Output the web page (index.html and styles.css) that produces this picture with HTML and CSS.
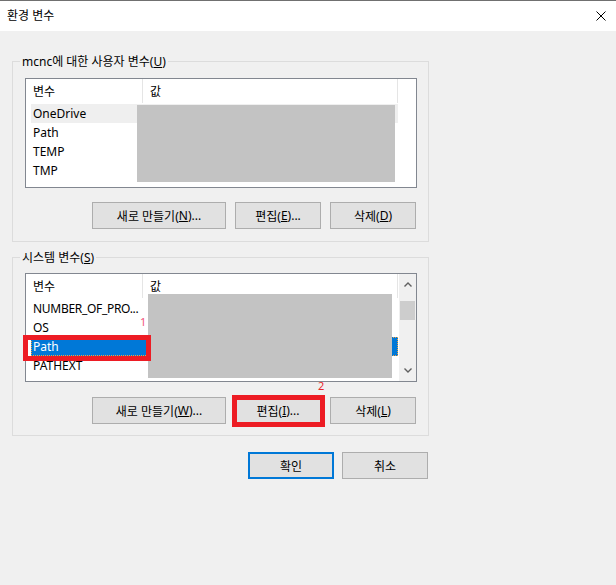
FILE: index.html
```html
<!DOCTYPE html>
<html lang="ko">
<head>
<meta charset="utf-8">
<title>환경 변수</title>
<link rel="stylesheet" href="styles.css">
</head>
<body>
<div class="dialog">
  <div class="titlebar">
    <span class="title">환경 변수</span>
    <svg class="close" width="10" height="10" viewBox="0 0 10 10"><path d="M0.5 0.5 L9.5 9.5 M9.5 0.5 L0.5 9.5" stroke="#000" stroke-width="1" fill="none"/></svg>
  </div>
  <div class="content">
    <div class="group group-user">
      <div class="legend">mcnc에 대한 사용자 변수(<u>U</u>)</div>
      <div class="list list-user">
        <div class="list-main">
          <div class="list-head">
            <div class="hcol hcol1">변수</div>
            <div class="hcol hcol2">값</div>
          </div>
          <div class="rows">
            <div class="row row-hover"><span class="cell">OneDrive</span></div>
            <div class="row"><span class="cell">Path</span></div>
            <div class="row"><span class="cell">TEMP</span></div>
            <div class="row"><span class="cell">TMP</span></div>
          </div>
        </div>
        <div class="redact redact-user"></div>
      </div>
      <div class="btnrow">
        <button class="btn btn-new">새로 만들기(<u>N</u>)...</button>
        <button class="btn btn-sm">편집(<u>E</u>)...</button>
        <button class="btn btn-sm">삭제(<u>D</u>)</button>
      </div>
    </div>

    <div class="group group-sys">
      <div class="legend">시스템 변수(<u>S</u>)</div>
      <div class="list list-sys">
        <div class="list-main">
          <div class="list-head">
            <div class="hcol hcol1">변수</div>
            <div class="hcol hcol2">값</div>
          </div>
          <div class="rows">
            <div class="row"><span class="cell cell-long">NUMBER_OF_PRO...</span></div>
            <div class="row"><span class="cell">OS</span></div>
            <div class="row row-selected"><span class="cell">Path</span></div>
            <div class="row"><span class="cell">PATHEXT</span></div>
          </div>
        </div>
        <div class="scrollbar">
          <div class="sb-btn sb-up"><svg width="8" height="5" viewBox="0 0 8 5"><path d="M0.5 4.5 L4 1 L7.5 4.5" stroke="#606060" stroke-width="1.4" fill="none"/></svg></div>
          <div class="sb-track"><div class="sb-thumb"></div></div>
          <div class="sb-btn sb-down"><svg width="8" height="5" viewBox="0 0 8 5"><path d="M0.5 0.5 L4 4 L7.5 0.5" stroke="#606060" stroke-width="1.4" fill="none"/></svg></div>
        </div>
        <div class="redact redact-sys"></div>
      </div>
      <div class="btnrow btnrow-sys">
        <button class="btn btn-new">새로 만들기(<u>W</u>)...</button>
        <button class="btn btn-sm">편집(<u>I</u>)...</button>
        <button class="btn btn-sm">삭제(<u>L</u>)</button>
      </div>
    </div>

    <div class="footer">
      <button class="btn btn-ok">확인</button>
      <button class="btn btn-cancel">취소</button>
    </div>
  </div>

  <div class="mark mark-path"></div>
  <div class="mark mark-edit"></div>
  <div class="label label-1">1</div>
  <div class="label label-2">2</div>
</div>
</body>
</html>
```

FILE: styles.css
```css
* { box-sizing: border-box; }
html, body { margin: 0; padding: 0; }
body {
  width: 616px;
  height: 585px;
  overflow: hidden;
  background: #f0f0f0;
  font-family: "Noto Sans", "Noto Sans CJK KR", sans-serif;
  font-size: 12px;
  color: #000;
}
.dialog {
  position: relative;
  width: 616px;
  height: 585px;
  background: #f0f0f0;
  border-top: 1px solid #707070;
}
.titlebar {
  height: 30px;
  background: #fff;
  display: flex;
  align-items: center;
  justify-content: space-between;
  padding: 0 10px 0 7px;
}
.title { line-height: 16px; }
.close { display: block; }

.content { padding: 30px 0 0 12px; }

.group {
  width: 417px;
  border: 1px solid #dcdcdc;
  padding: 0 11px 12px 12px;
}
.group-sys { margin-top: 15px; padding-bottom: 11px; }
.legend {
  width: fit-content;
  height: 17px;
  line-height: 17px;
  margin: -9px 0 0 -5px;
  padding: 0 2px;
  background: #f0f0f0;
}

.list {
  position: relative;
  display: flex;
  width: 392px;
  background: #fff;
  border: 1px solid #828790;
  overflow: hidden;
}
.list-user { margin-top: 8px; height: 110px; }
.list-sys { margin-top: 7px; height: 109px; }
.list-main { flex: 1; }

.list-head { display: flex; height: 25px; }
.hcol {
  height: 24px;
  padding-left: 7px;
  border-right: 1px solid #e5e5e5;
  display: flex;
  align-items: center;
}
.hcol1 { width: 117px; }
.hcol2 { width: 255px; }

.rows { padding-left: 5px; }
.row {
  width: 367px;
  height: 19px;
  padding-left: 2px;
  display: flex;
  align-items: center;
  white-space: nowrap;
}
.cell { line-height: 13px; }
.cell-long { letter-spacing: -0.3px; }
.row-hover { background: #efefef; }
.row-selected {
  background: #0078d7;
  color: #fff;
  outline: 1px dotted #f0a040;
  outline-offset: -1px;
}

.scrollbar {
  width: 17px;
  background: #f0f0f0;
  display: flex;
  flex-direction: column;
}
.sb-btn {
  height: 17px;
  display: flex;
  justify-content: center;
}
.sb-up { align-items: flex-end; padding-bottom: 4px; }
.sb-down { align-items: flex-end; padding-bottom: 8px; }
.sb-btn svg { display: block; }
.sb-track { flex: 1; padding: 10px 1px 0 1px; }
.sb-thumb { height: 19px; background: #cdcdcd; }

.redact { position: absolute; background: #c3c3c3; }
.redact-user { left: 111px; top: 26px; width: 258px; height: 77px; }
.redact-sys { left: 122px; top: 20px; width: 244px; height: 84px; }

.btnrow {
  display: flex;
  justify-content: flex-end;
  gap: 9px;
  margin-top: 14px;
  padding-right: 1px;
}
.btnrow-sys { margin-top: 15px; }
.btn {
  height: 27px;
  margin: 0;
  padding: 0;
  border: 1px solid #adadad;
  background: #e1e1e1;
  font-family: inherit;
  font-size: 12px;
  color: #000;
  display: flex;
  align-items: center;
  justify-content: center;
}
.btn-new { width: 134px; }
.btn-sm { width: 86px; }

.footer {
  display: flex;
  justify-content: flex-end;
  gap: 8px;
  width: 417px;
  margin-top: 16px;
  padding-right: 1px;
}
.btn-ok { width: 86px; border: 2px solid #0078d7; }
.btn-cancel { width: 86px; }

.mark {
  position: absolute;
  border: 5px solid #ed1c24;
}
.mark-path { left: 23px; top: 334px; width: 128px; height: 26px; }
.mark-edit { left: 232px; top: 394px; width: 93px; height: 32px; }
.label {
  position: absolute;
  font-size: 11px;
  line-height: 10px;
}
.label-1 { left: 140px; top: 316px; color: #f2547a; }
.label-2 { left: 318px; top: 380px; color: #e8262b; }
```
